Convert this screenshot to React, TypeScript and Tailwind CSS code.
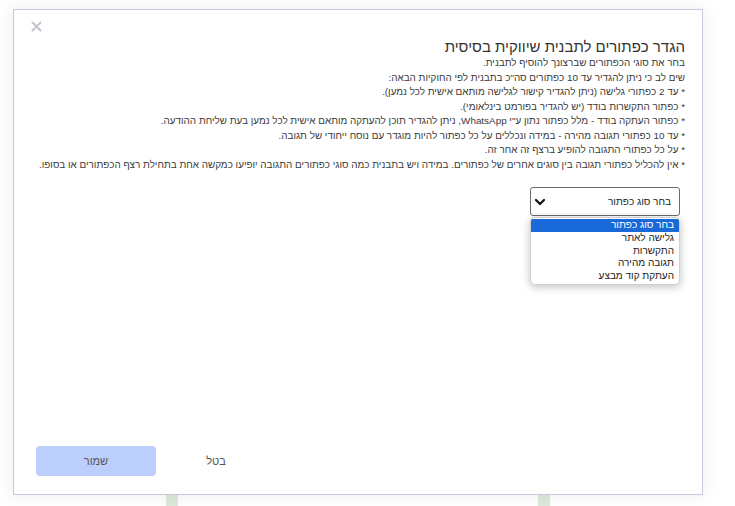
import React, { useState } from 'react';

const options = ['בחר סוג כפתור', 'גלישה לאתר', 'התקשרות', 'תגובה מהירה', 'העתקת קוד מבצע'];

const rules = [
  'בחר את סוגי הכפתורים שברצונך להוסיף לתבנית.',
  'שים לב כי ניתן להגדיר עד 10 כפתורים סה"כ בתבנית לפי החוקיות הבאה:',
  '* עד 2 כפתורי גלישה (ניתן להגדיר קישור לגלישה מותאם אישית לכל נמען).',
  '* כפתור התקשרות בודד (יש להגדיר בפורמט בינלאומי).',
  '* כפתור העתקה בודד - מלל כפתור נתון ע"י WhatsApp, ניתן להגדיר תוכן להעתקה מותאם אישית לכל נמען בעת שליחת ההודעה.',
  '* עד 10 כפתורי תגובה מהירה - במידה ונכללים על כל כפתור להיות מוגדר עם נוסח ייחודי של תגובה.',
  '* על כל כפתורי התגובה להופיע ברצף זה אחר זה.',
  '* אין להכליל כפתורי תגובה בין סוגים אחרים של כפתורים. במידה ויש בתבנית כמה סוגי כפתורים התגובה יופיעו כמקשה אחת בתחילת רצף הכפתורים או בסופו.',
];

const App: React.FC = () => {
  const [selected] = useState(0);

  return (
    <div
      className="w-[735px] h-[506px] bg-white overflow-hidden pt-[9px] pl-[13px]"
      style={{ fontFamily: '"Liberation Sans", Arial, sans-serif' }}
    >
      <div
        dir="rtl"
        className="relative w-[690px] h-[486px] bg-white border border-[#cac7dd] shadow-[0_0_18px_rgba(0,0,0,0.08)] flex flex-col"
      >
        {/* close */}
        <div className="flex justify-end pl-[17px] pt-[9px] h-[27px]">
          <svg width="11" height="11" viewBox="0 0 11 11" className="mt-[2px]">
            <path d="M1.5 1.5 L9.5 9.5 M9.5 1.5 L1.5 9.5" stroke="#c3c3cc" strokeWidth="2" strokeLinecap="round" />
          </svg>
        </div>

        {/* body */}
        <div className="pr-[17px] pl-[20px] text-right">
          <h2 className="text-[15px] leading-[19px] text-[#333]">הגדר כפתורים לתבנית שיווקית בסיסית</h2>
          {rules.map((line, i) => (
            <p key={i} className="text-[9.9px] leading-[14.5px] text-[#3a3a3a] whitespace-nowrap">
              {line}
            </p>
          ))}

          {/* select */}
          <div className="relative mt-[15px] mr-[5px] w-[150px]">
            <div className="h-[29px] border border-[#6b6b6b] rounded-[3px] flex items-center justify-between pr-[8px] pl-[3px] bg-white">
              <span className="text-[10px] text-[#222]">{options[selected]}</span>
              <svg width="12" height="12" viewBox="0 0 12 12">
                <path d="M2 4 L6 8 L10 4" fill="none" stroke="#111" strokeWidth="2.2" strokeLinecap="round" strokeLinejoin="round" />
              </svg>
            </div>

            <div className="absolute top-[30px] right-0 w-[150px] bg-white rounded-[5px] border border-[#d0d0d0] shadow-[0_2px_8px_rgba(0,0,0,0.25)] py-[1px] overflow-hidden">
              {options.map((o, i) => (
                <div
                  key={o}
                  className={`h-[12.8px] leading-[12.8px] text-[10px] pr-[5px] ${
                    i === 0 ? 'bg-[#1a69d8] text-white' : 'text-[#222]'
                  }`}
                >
                  {o}
                </div>
              ))}
            </div>
          </div>
        </div>

        {/* footer */}
        <div className="mt-auto flex justify-end pl-[22px] pb-[18px]">
          <button className="w-[120px] h-[30px] text-[11px] text-[#555] bg-white">בטל</button>
          <button className="w-[120px] h-[30px] rounded-[4px] text-[11px] text-[#555] bg-[#bccefb]">שמור</button>
        </div>
      </div>

      <div className="flex h-[12px]">
        <div className="ml-[153px] w-[12px] bg-[#dcebd9]" />
        <div className="ml-[360px] w-[12px] bg-[#dcebd9]" />
      </div>
    </div>
  );
};

export default App;
